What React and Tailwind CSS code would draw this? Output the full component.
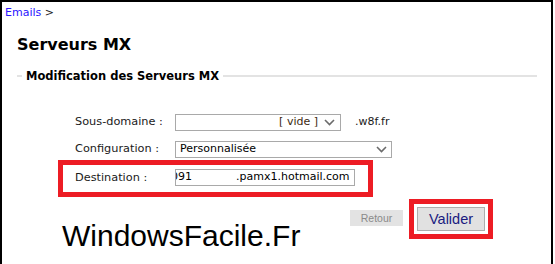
import React from 'react';

// small grey chevron used by the two selects
function Chevron({ className = '' }) {
  return (
    <svg width="11" height="7" viewBox="0 0 11 7" className={className}>
      <polyline points="1,1 5.5,5.5 10,1" fill="none" stroke="#6b6b6b" strokeWidth="1.6" />
    </svg>
  );
}

export default function App() {
  return (
    <div className="w-[553px] h-[264px] overflow-hidden bg-white border-l-2 border-t-2 border-r-2 border-black font-['DejaVu_Sans',sans-serif] text-[11px] text-[#1a1a1a]">
      {/* Breadcrumb */}
      <div className="pl-[3px] pt-[4px] leading-[13px]">
        <a href="#" className="text-[#2a14ff]">Emails</a> <span>&gt;</span>
      </div>

      {/* Title */}
      <h1 className="mt-[16px] pl-[15px] text-[16px] font-bold leading-[20px] text-black">Serveurs MX</h1>

      {/* Fieldset legend */}
      <div className="mt-[14px] ml-[15px] mr-[14px] flex items-center leading-[14px]">
        <div className="w-[5px] h-[2px] bg-[#e3e3e3]"></div>
        <span className="px-[4px] text-[11.5px] font-bold text-black">Modification des Serveurs MX</span>
        <div className="flex-1 h-[2px] bg-[#e3e3e3]"></div>
      </div>

      {/* Sous-domaine */}
      <div className="mt-[31px] pl-[73px] flex items-center">
        <label className="w-[100px] text-[11.3px]">Sous-domaine :</label>
        <div className="w-[166px] h-[17px] border border-[#a9a9a9] flex items-center justify-end pr-[5px]">
          <span className="text-[#3d2a10]">[ vide ]</span>
          <Chevron className="ml-[6px]" />
        </div>
        <span className="ml-[14px]">.w8f.fr</span>
      </div>

      {/* Configuration */}
      <div className="mt-[10px] pl-[73px] flex items-center">
        <label className="w-[100px] text-[11.3px]">Configuration :</label>
        <div className="w-[217px] h-[17px] border border-[#a9a9a9] flex items-center justify-between pl-[4px] pr-[4px]">
          <span className="text-black">Personnalisée</span>
          <Chevron />
        </div>
      </div>

      {/* Destination (highlighted) */}
      <div className="mt-[2px] ml-[56px] w-[315px] h-[37px] border-[5px] border-[#ed1c24] pl-[12px] pt-[4px] flex items-start">
        <label className="w-[100px] leading-[17px] text-[11.3px]">Destination :</label>
        <div className="w-[180px] h-[17px] border border-[#a9a9a9] overflow-hidden flex items-center">
          <span className="whitespace-pre text-black ml-[-5px]">
            091<span className="inline-block w-[44px]"></span>.pamx1.hotmail.com
          </span>
        </div>
      </div>

      {/* Bottom row */}
      <div className="mt-[2px] flex items-start">
        <div className="ml-[60px] mt-[21px] w-[288px] font-['Liberation_Sans',Arial,sans-serif] text-[30px] leading-[32px] text-black">
          WindowsFacile.Fr
        </div>
        <button className="mt-[11px] w-[53px] h-[16px] bg-[#e3e3e3] font-['Liberation_Sans',Arial,sans-serif] text-[10.5px] leading-[16px] text-[#8a8a8a]">
          Retour
        </button>
        <div className="ml-[6px] border-[5px] border-[#ed1c24] p-[3px]">
          <button className="w-[68px] h-[24px] bg-[#e1e1e1] border border-[#adadad] font-['Liberation_Sans',Arial,sans-serif] text-[14.5px] leading-[20px] text-[#1a1a80]">
            Valider
          </button>
        </div>
      </div>
    </div>
  );
}
